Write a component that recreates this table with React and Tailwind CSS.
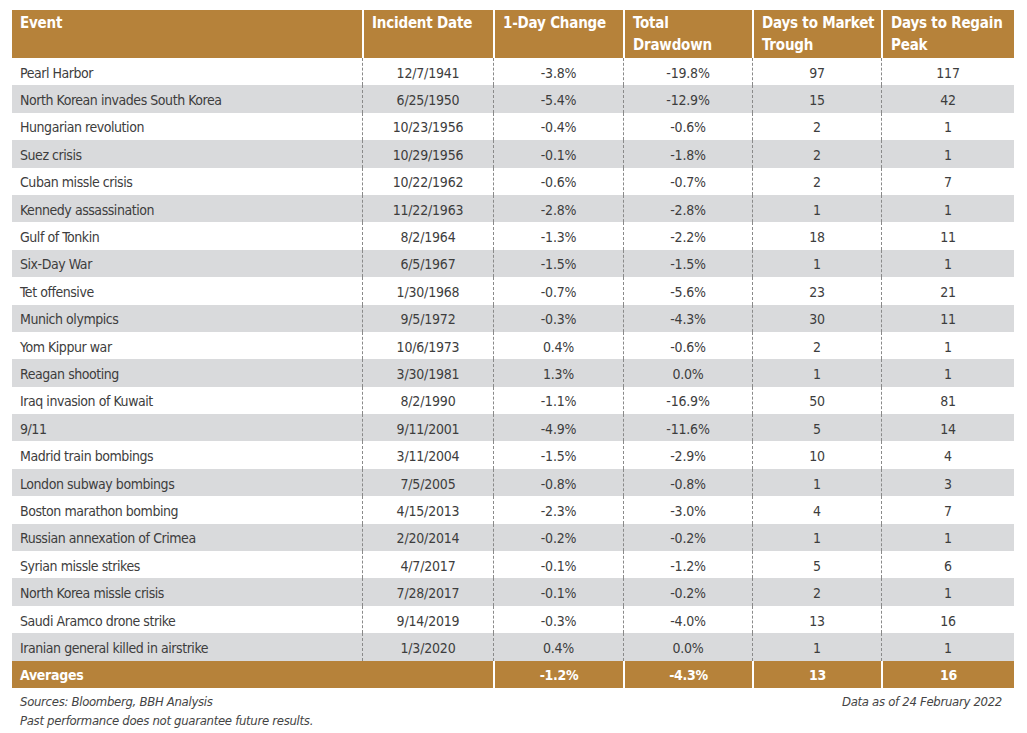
const ROWS = [
  ['Pearl Harbor', '12/7/1941', '-3.8%', '-19.8%', '97', '117'],
  ['North Korean invades South Korea', '6/25/1950', '-5.4%', '-12.9%', '15', '42'],
  ['Hungarian revolution', '10/23/1956', '-0.4%', '-0.6%', '2', '1'],
  ['Suez crisis', '10/29/1956', '-0.1%', '-1.8%', '2', '1'],
  ['Cuban missle crisis', '10/22/1962', '-0.6%', '-0.7%', '2', '7'],
  ['Kennedy assassination', '11/22/1963', '-2.8%', '-2.8%', '1', '1'],
  ['Gulf of Tonkin', '8/2/1964', '-1.3%', '-2.2%', '18', '11'],
  ['Six-Day War', '6/5/1967', '-1.5%', '-1.5%', '1', '1'],
  ['Tet offensive', '1/30/1968', '-0.7%', '-5.6%', '23', '21'],
  ['Munich olympics', '9/5/1972', '-0.3%', '-4.3%', '30', '11'],
  ['Yom Kippur war', '10/6/1973', '0.4%', '-0.6%', '2', '1'],
  ['Reagan shooting', '3/30/1981', '1.3%', '0.0%', '1', '1'],
  ['Iraq invasion of Kuwait', '8/2/1990', '-1.1%', '-16.9%', '50', '81'],
  ['9/11', '9/11/2001', '-4.9%', '-11.6%', '5', '14'],
  ['Madrid train bombings', '3/11/2004', '-1.5%', '-2.9%', '10', '4'],
  ['London subway bombings', '7/5/2005', '-0.8%', '-0.8%', '1', '3'],
  ['Boston marathon bombing', '4/15/2013', '-2.3%', '-3.0%', '4', '7'],
  ['Russian annexation of Crimea', '2/20/2014', '-0.2%', '-0.2%', '1', '1'],
  ['Syrian missle strikes', '4/7/2017', '-0.1%', '-1.2%', '5', '6'],
  ['North Korea missle crisis', '7/28/2017', '-0.1%', '-0.2%', '2', '1'],
  ['Saudi Aramco drone strike', '9/14/2019', '-0.3%', '-4.0%', '13', '16'],
  ['Iranian general killed in airstrike', '1/3/2020', '0.4%', '0.0%', '1', '1'],
]

const HEADERS = [
  ['Event'],
  ['Incident Date'],
  ['1-Day Change'],
  ['Total', 'Drawdown'],
  ['Days to Market', 'Trough'],
  ['Days to Regain', 'Peak'],
]

const COLS = 'grid grid-cols-[350px_131px_130px_129px_129px_133px]'
const FONT = { fontFamily: '"Liberation Sans Narrow", "DejaVu Sans Condensed", "Roboto Condensed", "Liberation Sans", sans-serif', fontStretch: 'condensed' }

export default function App() {
  return (
    <div className="w-[1027px] h-[733px] bg-white pt-[10px] pl-[12px]" style={FONT}>
      <div className="w-[1002px]">
        {/* header */}
        <div className={`${COLS} h-[48px] bg-[#b6823a]`}>
          {HEADERS.map((h, i) => (
            <div
              key={h[0]}
              className={`pl-2 pt-0.5 text-[15px] leading-[22px] font-bold text-white whitespace-nowrap tracking-[-0.2px] ${i > 0 ? 'border-l-2 border-white' : ''}`}
            >
              {h.map(l => <div key={l}>{l}</div>)}
            </div>
          ))}
        </div>

        {/* body */}
        {ROWS.map((r, ri) => (
          <div key={r[0]} className={`${COLS} h-[27.4px] ${ri % 2 ? 'bg-[#d9dadc]' : 'bg-white'}`}>
            {r.map((c, i) => (
              <div
                key={i}
                className={`flex items-center pt-[3px] text-[14px] text-[#3d3d3d] ${i === 0 ? 'px-2 tracking-[-0.45px]' : 'justify-center border-l border-dashed border-[#8a8a8a] tracking-[-0.2px]'}`}
              >
                {c}
              </div>
            ))}
          </div>
        ))}

        {/* averages */}
        <div className={`${COLS} h-[27px] bg-[#b6823a] text-white font-bold text-[14px] tracking-[-0.3px]`}>
          <div className="col-span-2 flex items-center pt-[2px] px-2">Averages</div>
          {['-1.2%', '-4.3%', '13', '16'].map((v, i) => (
            <div key={i} className="flex items-center justify-center pt-[2px] border-l-2 border-white">{v}</div>
          ))}
        </div>

        {/* footer */}
        <div className="flex justify-between pt-1 px-2 text-[13px] italic text-[#444] leading-[19px] tracking-[-0.3px]">
          <div>
            <div>Sources: Bloomberg, BBH Analysis</div>
            <div>Past performance does not guarantee future results.</div>
          </div>
          <div className="pr-1">Data as of 24 February 2022</div>
        </div>
      </div>
    </div>
  )
}
